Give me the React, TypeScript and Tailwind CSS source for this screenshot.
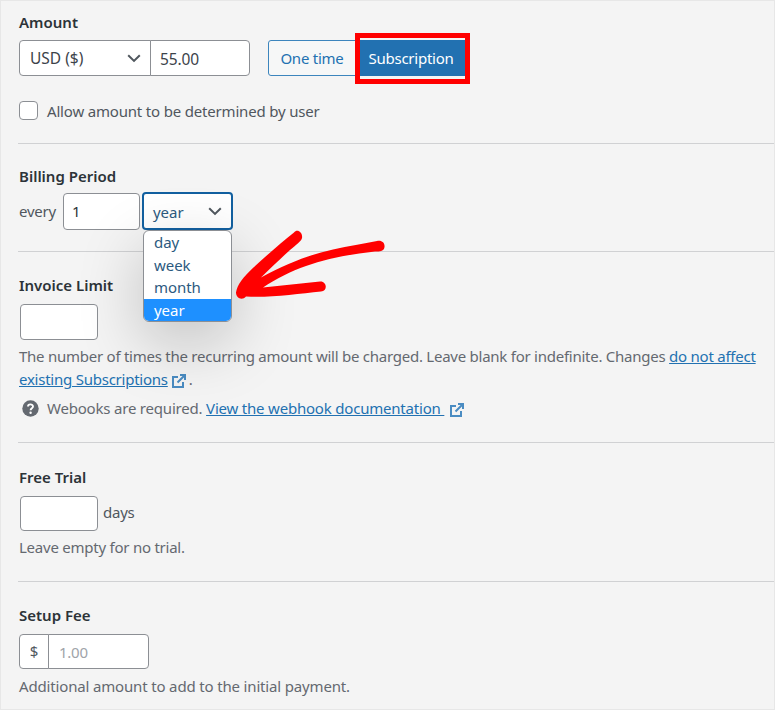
import { type ReactNode } from "react";

const PERIODS = ["day", "week", "month", "year"];

const INPUT = "block rounded-[4px] border border-[#8c8f94] bg-white text-[#2c3338] outline-none";

function Chevron() {
  return (
    <svg width="14" height="9" viewBox="0 0 14 9" fill="none" stroke="#50575e" strokeWidth="2">
      <path d="M1.200 1.200 7 6.900 12.800 1.200" />
    </svg>
  );
}

function ExternalIcon({ className }: { className?: string }) {
  return (
    <svg className={className} width="14" height="14" viewBox="0 0 14 14" fill="none" stroke="#4a8cc2" strokeWidth="2">
      <path d="M6 3H1v10h10V8" />
      <path d="M8 1h5v5M13 1 5.500 8.500" />
    </svg>
  );
}

function Heading({ children }: { children: ReactNode }) {
  return <h3 className="h-[22px] text-[15px] font-semibold leading-[22px] tracking-[0px] text-[#2c3338]">{children}</h3>;
}

function PeriodMenu() {
  return (
    <ul className="absolute -left-px top-[36px] z-10 w-[89px] overflow-hidden rounded-[6px] border border-[#8c8f94] bg-white tracking-[-0.05px] text-[#2c5a80] shadow-[0_20px_64px_2px_rgba(0,0,0,0.2)]">
      {PERIODS.map((p) => (
        <li
          key={p}
          className={p === "year" ? "h-[22px] bg-[#1e90ff] pl-[10px] leading-[22px] text-white" : "h-[22.6px] pl-[10px] leading-[22.6px]"}
        >
          {p}
        </li>
      ))}
    </ul>
  );
}

function Arrow() {
  return (
    <svg className="absolute left-[233px] top-[227px] z-20" width="154" height="74" viewBox="234 228 154 74" fill="#ff0000">
      <path d="M294 232.500C297 228.500 303 232 302 238C301.500 241 296 245 290 250C281 258 272 267 261 277.500C286 264 309 254.500 333 249.500C349 246 363 243.500 377 241C382 240 385 243 384.500 247C384 251 380 252 375 251.500C350 254 326 259 306 266C291 271 276 279 263 287.500L320 281.500C327 281 328 291 321 291.500C298 294 268 298 246 296.500C242 301 236 298 236 292.500C237 285 243 277 254 267C267 255 282 242 294 232.500Z" />
    </svg>
  );
}

export default function App() {
  return (
    <div className="relative h-[710px] w-[775px] overflow-hidden border border-[#e7e7e7] bg-[#f4f4f4] pl-[17px] font-['Noto_Sans','Open_Sans',sans-serif] text-[15px] tracking-[-0.24px] text-[#50575e]">
      <section className="h-[143px] border-b border-[#d0d1d3] pl-px pt-[10px]">
        <Heading>Amount</Heading>
        <div className="mt-[7px] flex">
          <div className="flex h-9 w-[132px] items-center justify-between rounded-l-[4px] border border-[#8c8f94] bg-white pl-[10px] pr-[9px] text-[15.5px] text-[#3c434a]">
            <span className="pt-px tracking-[0px]">USD ($)</span>
            <Chevron />
          </div>
          <input
            defaultValue="55.00"
            className="-ml-px h-9 w-[100px] rounded-r-[4px] border border-[#8c8f94] bg-white pl-[9px] pt-px text-[15.5px] tracking-[-0.1px] text-[#3c434a] outline-none"
          />
          <div className="relative ml-[18px] flex">
            <button className="h-9 w-[92px] rounded-l-[3px] border border-[#3c85bd] bg-[#f6f7f7] pr-[4px] text-center text-[#2271b1]">
              One time
            </button>
            <button className="h-9 w-[106px] bg-[#2271b1] pr-[4px] text-center text-white">Subscription</button>
            <div className="pointer-events-none absolute -top-[7px] left-[87px] h-[51px] w-[115px] border-[5px] border-[#ff0000]" />
          </div>
        </div>
        <label className="mt-[24px] flex h-[20px] items-center">
          <span className="h-[19px] w-[19px] rounded-[4px] border border-[#8c8f94] bg-white" />
          <span className="ml-[9px] pt-[2px] tracking-[-0.18px]">Allow amount to be determined by user</span>
        </label>
      </section>

      <section className="h-[108px] border-b border-[#d0d1d3] pl-px pt-[21px]">
        <Heading>Billing Period</Heading>
        <div className="mt-[5px] flex h-[38px] items-center">
          <span className="w-[44px]">every</span>
          <input defaultValue="1" className={`${INPUT} h-[37px] w-[77px] pl-[8px]`} />
          <div className="relative ml-[2px] flex h-[38px] w-[91px] items-center justify-between rounded-[4px] border-2 border-[#1260a0] bg-white pl-[9px] pr-[9px] text-[#2c5a80]">
            <span className="pt-[2px] tracking-[-0.05px]">year</span>
            <Chevron />
            <PeriodMenu />
          </div>
        </div>
      </section>

      <section className="h-[191px] border-b border-[#d0d1d3] pl-px pt-[22px]">
        <Heading>Invoice Limit</Heading>
        <input className={`${INPUT} ml-px mt-[8px] h-9 w-[78px]`} />
        <p className="mt-[5px] whitespace-nowrap leading-[23px] text-[#646970]">
          <span className="tracking-[-0.25px]">
            The number of times the recurring amount will be charged. Leave blank for indefinite. Changes{" "}
          </span>
          <a className="text-[#2271b1] underline">do not affect</a>
          <br />
          <a className="text-[#2271b1] underline">existing Subscriptions</a>
          <ExternalIcon className="ml-[4px] mr-[3px] inline-block align-[-3px]" />.
        </p>
        <p className="mt-[6px] flex h-[23px] items-center whitespace-nowrap text-[#646970]">
          <svg className="ml-[3px] mr-[9px]" width="17" height="17" viewBox="0 0 17 17">
            <circle cx="8.500" cy="8.500" r="8.200" fill="#646970" />
            <path d="M6 6.600C6 3.700 11 3.700 11 6.500C11 8.300 8.600 8.200 8.600 10.200" fill="none" stroke="#fff" strokeWidth="1.900" />
            <circle cx="8.600" cy="12.700" r="1.200" fill="#fff" />
          </svg>
          <span className="-ml-px tracking-[-0.2px]">Webooks are required.&nbsp;</span>
          <a className="tracking-[-0.2px] text-[#2271b1] underline">View the webhook documentation&nbsp;</a>
          <ExternalIcon className="ml-[6px] mt-[2px]" />
        </p>
      </section>

      <section className="h-[139px] border-b border-[#d0d1d3] pl-px pt-[23px]">
        <Heading>Free Trial</Heading>
        <div className="mt-[8px] flex h-9 items-start">
          <input className={`${INPUT} ml-px h-[35px] w-[78px]`} />
          <span className="ml-[5px] leading-[33px]">days</span>
        </div>
        <p className="mt-[4px] leading-[23px] text-[#646970]">Leave empty for no trial.</p>
      </section>

      <section className="pl-px pt-[22px]">
        <Heading>Setup Fee</Heading>
        <div className="mt-[8px] flex h-9">
          <span className="flex h-[35px] w-[30px] items-center justify-center rounded-l-[4px] border border-[#8c8f94] bg-white">$</span>
          <input
            placeholder="1.00"
            className="-ml-px h-[35px] w-[101px] rounded-r-[4px] border border-[#8c8f94] bg-white pl-[10px] outline-none placeholder:text-[#a0a4a9]"
          />
        </div>
        <p className="mt-[5px] leading-[23px] tracking-[-0.16px] text-[#646970]">Additional amount to add to the initial payment.</p>
      </section>

      <Arrow />
    </div>
  );
}
